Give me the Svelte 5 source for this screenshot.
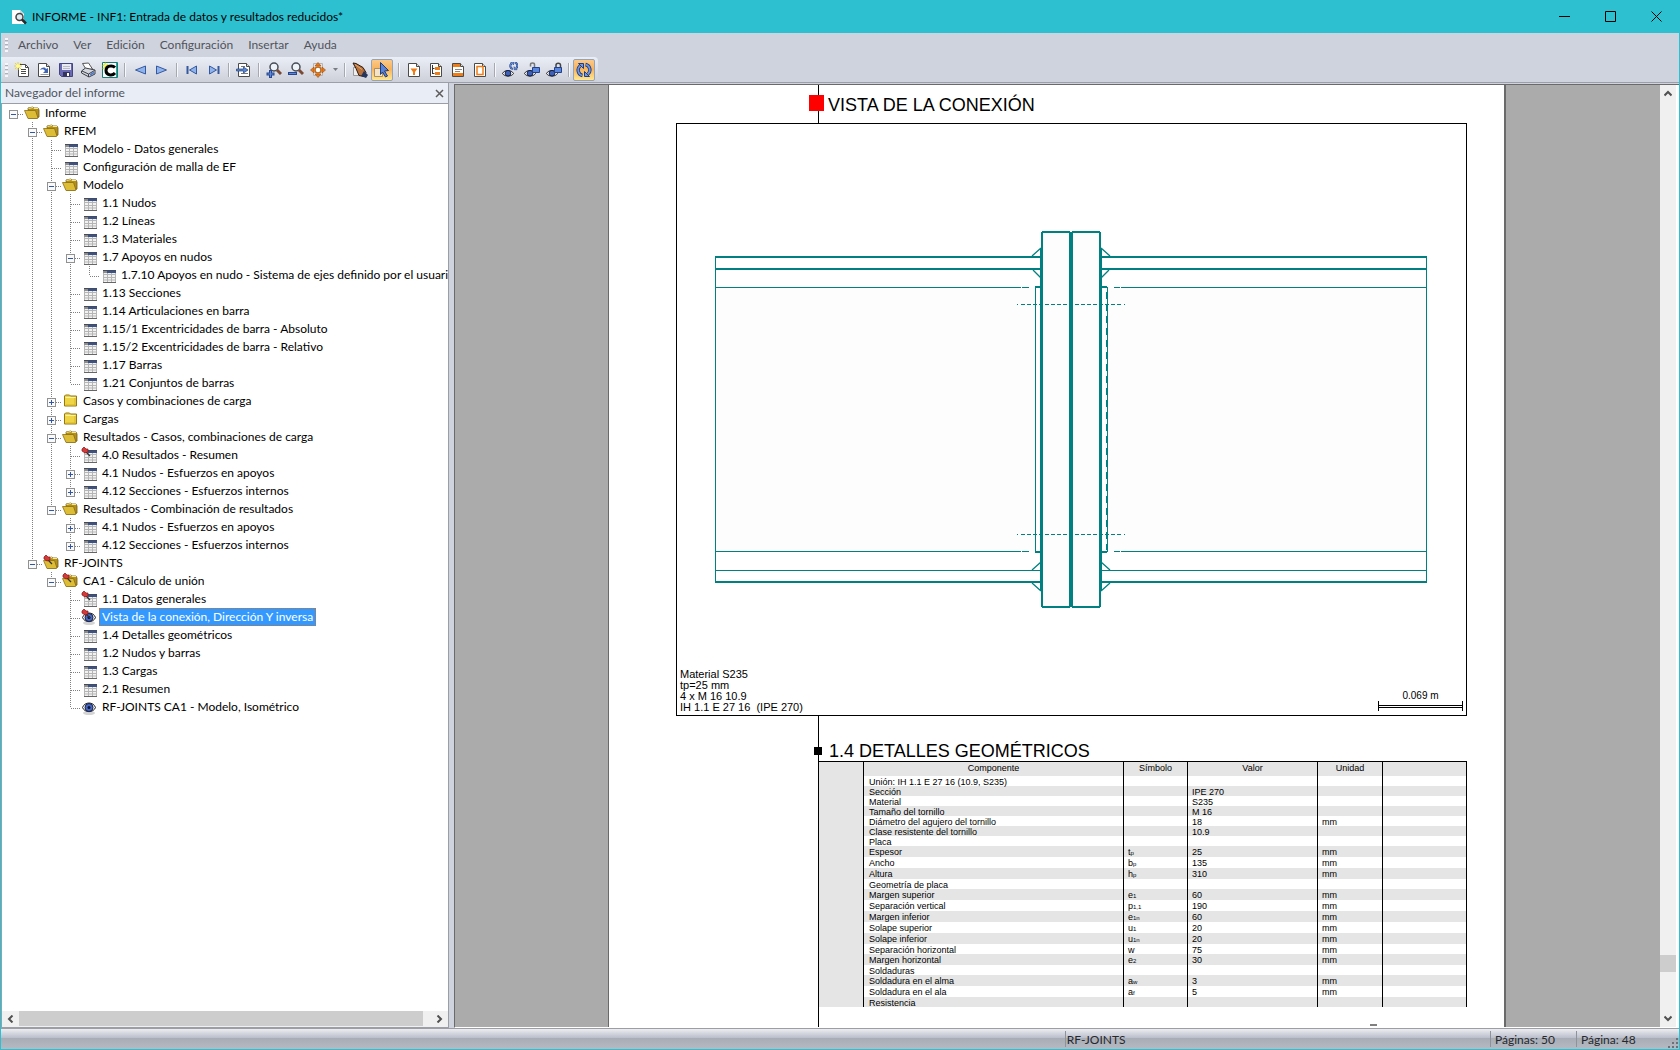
<script>
  const menus = ['Archivo', 'Ver', 'Edición', 'Configuración', 'Insertar', 'Ayuda'];

  const tools = [
    { id: 'new', label: 'Nuevo informe' },
    { id: 'open', label: 'Abrir informe' },
    { id: 'save', label: 'Guardar' },
    { id: 'print', label: 'Imprimir' },
    { id: 'lang', label: 'Idioma' },
    { id: 'sep' },
    { id: 'prev', label: 'Página anterior' },
    { id: 'next', label: 'Página siguiente' },
    { id: 'sep' },
    { id: 'first', label: 'Primera página' },
    { id: 'last', label: 'Última página' },
    { id: 'sep' },
    { id: 'goto', label: 'Ir a página' },
    { id: 'sep' },
    { id: 'zoomin', label: 'Acercar' },
    { id: 'zoomout', label: 'Alejar' },
    { id: 'fit', label: 'Ajustar' },
    { id: 'caret', label: 'Opciones de ajuste' },
    { id: 'sep' },
    { id: 'hand', label: 'Mover' },
    { id: 'pick', label: 'Seleccionar', on: true },
    { id: 'sep' },
    { id: 'filter', label: 'Selección' },
    { id: 'outline', label: 'Índice' },
    { id: 'header', label: 'Encabezado' },
    { id: 'cover', label: 'Portada' },
    { id: 'sep' },
    { id: 'eyesync', label: 'Actualizar vista' },
    { id: 'eyeopen', label: 'Desbloquear vista' },
    { id: 'eyelock', label: 'Bloquear vista' },
    { id: 'sep' },
    { id: 'refresh', label: 'Actualización automática', on: true },
  ];

  // [level, icon, label, toggle]
  const source = [
    [0, 'folder', 'Informe', '-'],
    [1, 'folder', 'RFEM', '-'],
    [2, 'table', 'Modelo - Datos generales'],
    [2, 'table', 'Configuración de malla de EF'],
    [2, 'folder', 'Modelo', '-'],
    [3, 'table', '1.1 Nudos'],
    [3, 'table', '1.2 Líneas'],
    [3, 'table', '1.3 Materiales'],
    [3, 'table', '1.7 Apoyos en nudos', '-'],
    [4, 'table', '1.7.10 Apoyos en nudo - Sistema de ejes definido por el usuari'],
    [3, 'table', '1.13 Secciones'],
    [3, 'table', '1.14 Articulaciones en barra'],
    [3, 'table', '1.15/1 Excentricidades de barra - Absoluto'],
    [3, 'table', '1.15/2 Excentricidades de barra - Relativo'],
    [3, 'table', '1.17 Barras'],
    [3, 'table', '1.21 Conjuntos de barras'],
    [2, 'closed', 'Casos y combinaciones de carga', '+'],
    [2, 'closed', 'Cargas', '+'],
    [2, 'folder', 'Resultados - Casos, combinaciones de carga', '-'],
    [3, 'table pin', '4.0 Resultados - Resumen'],
    [3, 'table', '4.1 Nudos - Esfuerzos en apoyos', '+'],
    [3, 'table', '4.12 Secciones - Esfuerzos internos', '+'],
    [2, 'folder', 'Resultados - Combinación de resultados', '-'],
    [3, 'table', '4.1 Nudos - Esfuerzos en apoyos', '+'],
    [3, 'table', '4.12 Secciones - Esfuerzos internos', '+'],
    [1, 'folder pin', 'RF-JOINTS', '-'],
    [2, 'folder pin', 'CA1 - Cálculo de unión', '-'],
    [3, 'table pin', '1.1 Datos generales'],
    [3, 'eye pin', 'Vista de la conexión, Dirección Y inversa'],
    [3, 'table', '1.4 Detalles geométricos'],
    [3, 'table', '1.2 Nudos y barras'],
    [3, 'table', '1.3 Cargas'],
    [3, 'table', '2.1 Resumen'],
    [3, 'eye', 'RF-JOINTS CA1 - Modelo, Isométrico'],
  ];

  function continues(index, level) {
    for (let i = index + 1; i < source.length; i++) {
      if (source[i][0] < level) return false;
      if (source[i][0] === level) return true;
    }
    return false;
  }

  const rows = source.map(([level, icon, label, toggle], i) => ({
    level,
    icon,
    label,
    toggle,
    guides: Array.from({ length: level }, (_, k) => continues(i, k)),
    more: continues(i, level),
  }));

  let selected = $state(28);

  const details = [
    ['Unión: IH 1.1 E 27 16 (10.9, S235)', '', '', '', ''],
    ['Sección', '', '', 'IPE 270', ''],
    ['Material', '', '', 'S235', ''],
    ['Tamaño del tornillo', '', '', 'M 16', ''],
    ['Diámetro del agujero del tornillo', '', '', '18', 'mm'],
    ['Clase resistente del tornillo', '', '', '10.9', ''],
    ['Placa', '', '', '', ''],
    ['Espesor', 't', 'p', '25', 'mm'],
    ['Ancho', 'b', 'p', '135', 'mm'],
    ['Altura', 'h', 'p', '310', 'mm'],
    ['Geometría de placa', '', '', '', ''],
    ['Margen superior', 'e', '1', '60', 'mm'],
    ['Separación vertical', 'p', '1,1', '190', 'mm'],
    ['Margen inferior', 'e', '1n', '60', 'mm'],
    ['Solape superior', 'u', '1', '20', 'mm'],
    ['Solape inferior', 'u', '1n', '20', 'mm'],
    ['Separación horizontal', 'w', '', '75', 'mm'],
    ['Margen horizontal', 'e', '2', '30', 'mm'],
    ['Soldaduras', '', '', '', ''],
    ['Soldadura en el alma', 'a', 'w', '3', 'mm'],
    ['Soldadura en el ala', 'a', 'f', '5', 'mm'],
    ['Resistencia', '', '', '', ''],
  ];
</script>

{#snippet sheet()}
  <path d="M2.500 1.500h8l3 3v10h-11z" fill="#fff" stroke="#4a4a48" />
  <path d="M10.500 1.500v3h3" fill="#ddd" stroke="#4a4a48" />
{/snippet}

{#snippet eye()}
  <path d="M.5 11.500c2-4 9-4 11 0-2 3.500-9 3.500-11 0z" fill="#f4f4f4" stroke="#222" />
  <circle cx="6" cy="11.200" r="2.800" fill="#3f62b8" stroke="#14224d" />
{/snippet}

{#snippet cycle()}
  <path d="M9.500 2.500A5.500 5.500 0 0 1 12 12" fill="none" stroke="#1f3c82" stroke-width="3.400" />
  <path d="M6.500 13.500A5.500 5.500 0 0 1 4 4" fill="none" stroke="#1f3c82" stroke-width="3.400" />
  <path d="M13.500 14.500H8.500V9.500zM2.500 1.500h5v5z" fill="#6e97e6" stroke="#1f3c82" />
  <path d="M9.500 2.500A5.500 5.500 0 0 1 12 12M6.500 13.500A5.500 5.500 0 0 1 4 4" fill="none" stroke="#6e97e6" stroke-width="1.600" />
{/snippet}

{#snippet toolIcon(id)}
  <svg viewBox="0 0 16 16" width="16" height="16" aria-hidden="true">
    {#if id === 'new'}
      <path d="M4.500 2.500h7l3 3v9h-10z" fill="#fff" stroke="#4a4a48" />
      <path d="M11.500 2.500v3h3M7 7.500h5M7 9.500h5M7 11.500h5" fill="none" stroke="#4a4a48" />
      <path d="M4 0v8M0 4h8M1 1l6 6M7 1L1 7" stroke="#e8d431" stroke-width="1" />
      <circle cx="4" cy="4" r="2" fill="#fff9a0" />
    {:else if id === 'open'}
      {@render sheet()}
      <path d="M4 8c2-3 5-3 6-1l2-1v5H7l2-2c-1-2-3-2-5-1z" fill="#3f66b4" />
      <path d="M4.500 12.500h8" stroke="#999" />
    {:else if id === 'save'}
      <path d="M1.500 1.500h13v13h-11l-2-2z" fill="#6a69b4" stroke="#45457f" />
      <path d="M4 2h9v6H4z" fill="#e9e9f2" />
      <path d="M5 4.500h7M5 6.500h7" stroke="#b9b9c9" />
      <path d="M5 10h7v4.500H5z" fill="#33335c" />
      <path d="M9 11h2v3H9z" fill="#fff" />
    {:else if id === 'print'}
      <path d="M2.500 1.500l6-.5 4 6-6 1z" fill="#fff" stroke="#555" />
      <path d="M1.500 9l4-3 9.500 2v4l-6 3-7.500-4z" fill="#d3d6dd" stroke="#3c3f47" />
      <path d="M2 9l6.500 3 6-3.500M8.500 12v3" fill="none" stroke="#3c3f47" />
      <path d="M10 13l4-2.500" stroke="#4d79c8" stroke-width="1.500" />
    {:else if id === 'lang'}
      <path d="M.5.5h15v15H.5z" fill="#fff" stroke="#157d76" />
      <path d="M1 7l5-5M1 4l3-3" stroke="#e7e03a" stroke-width="1.500" />
      <path d="M13 5.500C10 2.500 4 4 4 8.500s6 6 9 2.500" fill="none" stroke="#000" stroke-width="3" />
      <path d="M14.500 1v14" stroke="#2ca59b" />
    {:else if id === 'prev'}
      <path d="M13.500 4v8L3.500 8z" fill="#8fb3ec" stroke="#35589f" />
    {:else if id === 'next'}
      <path d="M2.500 4v8l10-4z" fill="#8fb3ec" stroke="#35589f" />
    {:else if id === 'first'}
      <path d="M12.500 4v8L5.500 8z" fill="#8fb3ec" stroke="#35589f" />
      <path d="M3.500 4v8" stroke="#35589f" stroke-width="2" />
    {:else if id === 'last'}
      <path d="M3.500 4v8l7-4z" fill="#8fb3ec" stroke="#35589f" />
      <path d="M12.500 4v8" stroke="#35589f" stroke-width="2" />
    {:else if id === 'goto'}
      {@render sheet()}
      <path d="M5 4.500h4M5 11.500h7" stroke="#777" />
      <path d="M.5 7h7V5l4.500 3-4.500 3V9h-7z" fill="#5a86d6" stroke="#24427f" stroke-width=".7" />
    {:else if id === 'zoomin' || id === 'zoomout'}
      <circle cx="8" cy="5" r="4" fill="#eef3fa" stroke="#474b55" stroke-width="1.500" />
      <path d="M11 8l4 4" stroke="#7a4a35" stroke-width="3" />
      {#if id === 'zoomin'}
        <path d="M4.500 8v8M.5 12h8" stroke="#27478f" stroke-width="3" />
        <path d="M4.500 9v6M1.500 12h6" stroke="#5e88dc" />
      {:else}
        <path d="M0 11.500h9" stroke="#27478f" stroke-width="3" />
        <path d="M1 11.500h7" stroke="#5e88dc" />
      {/if}
    {:else if id === 'fit'}
      <path d="M3.500 1.500h9v12h-9z" fill="#e4e4e4" stroke="#b4b4b4" />
      <path d="M8 .5l3 3.500H5zM8 15.500L11 12H5zM.5 8L4 5v6zM15.500 8L12 5v6z" fill="#e8791a" stroke="#9c4c0c" stroke-width=".6" />
      <circle cx="8" cy="8" r="3" fill="#fff" stroke="#c8660f" stroke-width="1.500" />
    {:else if id === 'hand'}
      <path d="M1.500 5.500h6v8h-6z" fill="#eee" stroke="#999" />
      <path d="M1 1l3 .5 7 4 3 5-2 4-5-1-3-7z" fill="#b8713a" stroke="#2b1a10" />
      <path d="M12 9l4 4-2 3-5-2z" fill="#25355c" />
      <path d="M3 2.500l7 5" stroke="#e3a873" />
    {:else if id === 'pick'}
      <path d="M.5 6.500h8v8h-8z" fill="#f4e3c6" stroke="#a98f66" />
      <path d="M6.500.5l8 8-4 .5 3 5-2 1-3-5-2 2.500z" fill="#5a83d8" stroke="#1d3a7c" />
    {:else if id === 'filter'}
      {@render sheet()}
      <path d="M4.500 6.500h7L9 10v3H7v-3z" fill="#ee7d18" />
    {:else if id === 'outline'}
      {@render sheet()}
      <path d="M4.500 3v9M4.500 6.500h2M4.500 11.500h2" fill="none" stroke="#333" />
      <path d="M7 5h5v3H7zM7 10h5v3H7z" fill="#ee7d18" />
    {:else if id === 'header'}
      {@render sheet()}
      <path d="M3 2h7v3H3zM3 11h10v3H3z" fill="#ee7d18" />
      <path d="M5 7.500h7M5 9.500h5" stroke="#888" />
    {:else if id === 'cover'}
      {@render sheet()}
      <path d="M5 4.500h6v8H5z" fill="#fff" stroke="#ee7d18" stroke-width="1.500" />
    {:else if id === 'eyesync'}
      {@render eye()}
      <g class="mini">{@render cycle()}</g>
    {:else if id === 'eyeopen'}
      {@render eye()}
      <path d="M6.500 4.500V2.500c0-2 4-2 4 0v3" fill="none" stroke="#777" stroke-width="1.500" />
      <path d="M8.500 5.500h7v5h-7z" fill="#5b86de" stroke="#23418a" />
    {:else if id === 'eyelock'}
      {@render eye()}
      <path d="M10 6V3c0-2.500 4.500-2.500 4.500 0v3" fill="none" stroke="#444" stroke-width="1.500" />
      <path d="M8.500 5.500h7v5h-7z" fill="#5b86de" stroke="#23418a" />
    {:else if id === 'refresh'}
      {@render cycle()}
    {/if}
  </svg>
{/snippet}

{#snippet treeIcon(kind)}
  <svg viewBox="0 0 18 18" width="18" height="18" aria-hidden="true">
    {#if kind.startsWith('folder')}
      <path d="M5 4l5-1 1 1h4l1 2v7l-2 1H6z" fill="#b3901c" stroke="#73590d" stroke-width=".8" />
      <path d="M1.500 6.500h11l2.500 7.500-1 .5H5z" fill="#dcbd35" stroke="#8a6c14" stroke-width=".8" />
      <path d="M5.500 4.500L10 3.500l1 1h4" fill="none" stroke="#f6e98e" />
    {:else if kind === 'closed'}
      <path d="M3.500 4l1-1h4l1 1h6v10h-12z" fill="#efd445" stroke="#95780f" />
      <path d="M4.500 5.500h10" stroke="#fbf3ad" />
      <path d="M14 6v7H5" fill="none" stroke="#d6b62e" />
    {:else if kind.startsWith('table')}
      <path d="M4 4h13v13H4z" fill="#f2f2f2" />
      <path d="M4.500 4v13M8.500 7v10M12.500 7v10M16.500 4v13M4 8.500h13M4 11.500h13M4 14h13" stroke="#b5b5b5" fill="none" />
      <path d="M4 4h4v3H4z" fill="#8d8d8d" />
      <path d="M8 4h9v3H8z" fill="#3a528c" />
      <path d="M4 4.500h13" stroke="#444a58" />
      <path d="M4 16.500h13" stroke="#666" />
    {:else}
      <ellipse cx="9" cy="15" rx="6" ry="2" fill="#d4d4d4" />
      <path d="M2.500 9.500c2-6 11-6 13 0-2 5.500-11 5.500-13 0z" fill="#f3f3f3" stroke="#222" />
      <circle cx="9" cy="9.500" r="4" fill="#4668c0" stroke="#18244d" />
      <circle cx="9" cy="9.500" r="1.500" fill="#0c1433" />
    {/if}
    {#if kind.endsWith('pin')}
      <path d="M6 6l4 4" stroke="#333" stroke-width="1.300" />
      <path d="M2 3l2-2 2 2h2v3l-3 1-3-2z" fill="#d33a3a" stroke="#8a1414" stroke-width=".7" />
    {/if}
  </svg>
{/snippet}

<div class="window">
  <header class="titlebar">
    <svg class="logo" viewBox="0 0 16 16" width="16" height="16" aria-hidden="true">
      <path d="M1 1h8l4 4v10H1z" fill="#fff" />
      <path d="M9 1v4h4z" fill="#cfd6dc" />
      <circle cx="8.500" cy="8" r="3.500" fill="#dcecf2" stroke="#444" stroke-width="1.500" />
      <path d="M11 10.500l4 4" stroke="#2a2a2a" stroke-width="2.500" />
    </svg>
    <h1>INFORME - INF1: Entrada de datos y resultados reducidos*</h1>
    <div class="winbuttons">
      <button aria-label="Minimizar"><svg viewBox="0 0 11 11" width="11" height="11"><path d="M0 5.500h11" /></svg></button>
      <button aria-label="Maximizar"><svg viewBox="0 0 11 11" width="11" height="11"><path d="M.5.5h10v10H.5z" /></svg></button>
      <button aria-label="Cerrar"><svg viewBox="0 0 11 11" width="11" height="11"><path d="M.5.5l10 10M10.500.5l-10 10" /></svg></button>
    </div>
  </header>

  <nav class="menubar">
    <span class="grip"></span>
    {#each menus as m}<button>{m}</button>{/each}
  </nav>

  <div class="toolrow">
    <div class="toolbar" role="toolbar">
      <span class="grip"></span>
      {#each tools as t}
        {#if t.id === 'sep'}
          <span class="sep"></span>
        {:else if t.id === 'caret'}
          <button class="caret" aria-label={t.label}><svg viewBox="0 0 5 3" width="5" height="3"><path d="M0 0h5L2.500 3z" fill="#777b84" /></svg></button>
        {:else}
          <button class:on={t.on} aria-label={t.label}>{@render toolIcon(t.id)}</button>
        {/if}
      {/each}
    </div>
  </div>

  <div class="work">
    <aside class="navigator">
      <div class="panelhead">
        <h2>Navegador del informe</h2>
        <button aria-label="Cerrar panel"><svg viewBox="0 0 9 9" width="9" height="9"><path d="M1 1l7 7M8 1L1 8" stroke="#5c5c5c" stroke-width="1.500" /></svg></button>
      </div>
      <div class="treebox">
        <ul class="tree">
          {#each rows as row, i}
            <li>
              {#each row.guides as g, k}
                <span class="cell" class:full={g && k > 0}></span>
              {/each}
              <span class="cell branch" class:root={row.level === 0} class:more={row.more}>
                {#if row.toggle}
                  <button class="toggle" aria-label={row.toggle === '-' ? 'Contraer' : 'Expandir'}>
                    <svg viewBox="0 0 9 9" width="9" height="9"><rect x=".5" y=".5" width="8" height="8" fill="#fafafa" stroke="#919191" /><path d={row.toggle === '-' ? 'M2 4.500h5' : 'M2 4.500h5M4.500 2v5'} stroke="#3355a5" /></svg>
                  </button>
                {/if}
              </span>
              <span class="icon">{@render treeIcon(row.icon)}</span>
              <button class="label" class:selected={i === selected} onclick={() => (selected = i)}>{row.label}</button>
            </li>
          {/each}
        </ul>
        <div class="hscroll">
          <button aria-label="Izquierda"><svg viewBox="0 0 7 8" width="7" height="8"><path d="M5.500.5L2 4l3.500 3.500" /></svg></button>
          <span class="track"><span class="thumb"></span></span>
          <button aria-label="Derecha"><svg viewBox="0 0 7 8" width="7" height="8"><path d="M1.500.5L5 4 1.500 7.500" /></svg></button>
        </div>
      </div>
    </aside>

    <main class="viewer">
      <div class="desk">
        <article class="page">
          <h2 class="heading first"><span class="mark red"></span>VISTA DE LA CONEXIÓN</h2>
          <figure>
            <svg class="drawing" viewBox="677 124 789 591" role="img" aria-label="Vista de la conexión">
              <g fill="#fdfdfd">
                <rect x="715" y="287" width="320" height="264" />
                <rect x="1108" y="287" width="319" height="264" />
                <rect x="1042" y="232" width="59" height="375" />
              </g>
              <g fill="#008080" shape-rendering="crispEdges">
                <rect x="715" y="256" width="1" height="327" />
                <rect x="1426" y="256" width="1" height="327" />
                <rect x="715" y="256" width="326" height="2" />
                <rect x="715" y="268" width="326" height="2" />
                <rect x="715" y="287" width="306" height="1" />
                <rect x="1022" y="287" width="7" height="1" />
                <rect x="715" y="551" width="306" height="1" />
                <rect x="1022" y="551" width="7" height="1" />
                <rect x="715" y="570" width="326" height="1" />
                <rect x="715" y="581" width="326" height="2" />
                <rect x="1101" y="256" width="326" height="2" />
                <rect x="1101" y="268" width="326" height="2" />
                <rect x="1114" y="287" width="6" height="1" />
                <rect x="1121" y="287" width="306" height="1" />
                <rect x="1114" y="551" width="6" height="1" />
                <rect x="1121" y="551" width="306" height="1" />
                <rect x="1101" y="570" width="326" height="1" />
                <rect x="1101" y="581" width="326" height="2" />
                <rect x="1041" y="232" width="2" height="375" />
                <rect x="1040" y="248" width="3" height="342" />
                <rect x="1099" y="232" width="2" height="375" />
                <rect x="1099" y="248" width="3" height="342" />
                <rect x="1069" y="232" width="4" height="375" />
                <rect x="1042" y="231" width="28" height="2" />
                <rect x="1072" y="231" width="28" height="2" />
                <rect x="1042" y="606" width="28" height="2" />
                <rect x="1072" y="606" width="28" height="2" />
                <rect x="1035" y="286" width="6" height="2" />
                <rect x="1035" y="286" width="1" height="267" />
                <rect x="1035" y="551" width="6" height="2" />
                <rect x="1101" y="286" width="6" height="2" />
                <rect x="1107" y="287" width="1" height="265" />
                <rect x="1101" y="551" width="6" height="2" />
                <rect x="1017" y="304" width="1" height="1" />
                <rect x="1017" y="534" width="1" height="1" />
                <rect x="1124" y="304" width="1" height="1" />
                <rect x="1124" y="534" width="1" height="1" />
              </g>
              <g fill="none" stroke="#008080">
                <path d="M1106.500 292V550" stroke-dasharray="7 5" />
                <path d="M1021 304.500H1122M1021 534.500H1122" stroke-dasharray="4 2" />
                <path d="M1032 256l9-8M1033 270l8 8M1110 256l-9-8M1109 270l-8 8M1032 570l9-8M1032 583l9 8M1110 570l-9-8M1110 583l-9 8" stroke-width="1.300" />
              </g>
            </svg>
            <figcaption>
              <p>Material S235<br />tp=25 mm<br />4 x M 16 10.9<br />IH 1.1 E 27 16&nbsp; (IPE 270)</p>
              <div class="scale">
                <span>0.069 m</span>
                <svg viewBox="0 0 85 10" width="85" height="10" aria-hidden="true"><path d="M.5 0v10M84.500 0v10M0 4.500h85M0 6.500h85" stroke="#000" /></svg>
              </div>
            </figcaption>
          </figure>
          <h2 class="heading"><span class="mark"></span>1.4 DETALLES GEOMÉTRICOS</h2>
          <table>
            <colgroup>
              <col class="c0" /><col /><col class="c2" /><col class="c3" /><col class="c4" /><col class="c5" />
            </colgroup>
            <thead>
              <tr><th></th><th>Componente</th><th>Símbolo</th><th>Valor</th><th>Unidad</th><th></th></tr>
            </thead>
            <tbody>
              {#each details as [name, sym, sub, value, unit]}
                <tr class:tall={sub}>
                  <td></td><td>{name}</td><td>{sym}{#if sub}<small>{sub}</small>{/if}</td><td>{value}</td><td>{unit}</td><td></td>
                </tr>
              {/each}
            </tbody>
          </table>
          <span class="footmark"></span>
        </article>
      </div>
      <div class="vscroll">
        <button aria-label="Arriba"><svg viewBox="0 0 8 7" width="8" height="7"><path d="M.5 5.500L4 2l3.500 3.500" /></svg></button>
        <span class="track"><span class="thumb"></span></span>
        <button aria-label="Abajo"><svg viewBox="0 0 8 7" width="8" height="7"><path d="M.5 1.500L4 5l3.500-3.500" /></svg></button>
      </div>
    </main>
  </div>

  <footer class="status">
    <span class="module">RF-JOINTS</span>
    <span class="pages">Páginas: 50</span>
    <span class="current">Página: 48</span>
    <svg viewBox="0 0 12 12" width="12" height="12" aria-hidden="true"><path d="M9 1h2v2H9zM5 5h2v2H5zM9 5h2v2H9zM1 9h2v2H1zM5 9h2v2H5zM9 9h2v2H9z" fill="#6d7079" /></svg>
  </footer>
</div>

<style>
  :global(body) { margin: 0; }
  * { box-sizing: border-box; }
  button { border: 0; padding: 0; margin: 0; background: none; font: inherit; color: inherit; }
  h1, h2, p, ul, figure { margin: 0; padding: 0; font-weight: normal; }
  svg { display: block; }

  .window {
    height: 100vh;
    display: flex;
    flex-direction: column;
    border: 1px solid #2cc0d0;
    border-top: 0;
    background: #cfd3dd;
    font: 12px/18px Lato, "Open Sans", sans-serif;
    color: #000;
    overflow: hidden;
  }

  .titlebar { display: flex; align-items: center; height: 33px; flex: none; background: #2cc0d0; padding-left: 10px; }
  .titlebar h1 { font-size: 12px; margin-left: 5px; flex: 1; white-space: nowrap; }
  .winbuttons { display: flex; }
  .winbuttons button { width: 46px; height: 33px; display: grid; place-items: center; }
  .winbuttons path { fill: none; stroke: #000; }

  .menubar { display: flex; align-items: center; gap: 15px; height: 24px; flex: none; padding-left: 4px; color: #50545c; }
  .menubar .grip { margin-right: -5px; }
  .grip { width: 3px; height: 14px; flex: none; background: repeating-linear-gradient(#f6f7fa 0 2px, #aeb2bc 2px 3px, transparent 3px 4px); }

  .toolrow { flex: none; border-bottom: 1px solid #9c9fa8; display: flex; }
  .toolbar {
    display: flex;
    align-items: center;
    height: 25px;
    padding: 0 1px 0 4px;
    border-radius: 0 4px 4px 0;
    background: linear-gradient(#eaeef7, #dcdfe8 50%, #cdd0d9);
  }
  .toolbar .grip { margin-right: 3px; }
  .toolbar button { width: 22px; height: 22px; display: grid; place-items: center; }
  .toolbar .caret { width: 12px; }
  .toolbar .sep { width: 8px; height: 14px; background: linear-gradient(90deg, transparent 3px, #a6a9b2 3px 4px, #f8f9fb 4px 5px, transparent 5px); }
  .toolbar .on { margin: 0 2px 0 0; border: 1px solid #95a3b4; border-radius: 2px; background: linear-gradient(#fbc98a, #f8b25b 45%, #ffe78f); }
  .mini { transform: translate(7px, -1px) scale(0.6); }

  .work { flex: 1; min-height: 0; display: flex; gap: 5px; }
  .navigator { width: 448px; flex: none; display: flex; flex-direction: column; border-right: 1px solid #9b9ea6; }
  .panelhead { height: 20px; flex: none; display: flex; align-items: center; justify-content: space-between; padding: 0 4px; background: #e9edf6; color: #50545c; }
  .panelhead h2 { font-size: 12px; }
  .treebox { flex: 1; min-height: 0; display: flex; flex-direction: column; background: #fff; border: 1px solid #9b9ea6; border-right: 0; }
  .tree { flex: 1; list-style: none; overflow: hidden; padding: 0 0 0 2px; }
  .tree li { display: flex; height: 18px; }
  .cell, .icon { width: 19px; height: 18px; flex: none; position: relative; }
  .cell.full, .branch { background: repeating-linear-gradient(#808080 0 1px, transparent 1px 2px) 9px 0 / 1px 100% no-repeat; }
  .branch { background-size: 1px 10px; display: grid; place-items: center; }
  .branch.more { background-size: 1px 100%; }
  .branch.root { background: none; }
  .branch::before { content: ""; position: absolute; left: 10px; right: 0; top: 10px; height: 1px; background: repeating-linear-gradient(90deg, #808080 0 1px, transparent 1px 2px); }
  .toggle { position: relative; margin-top: 3px; }
  .label { height: 18px; line-height: 16px; padding: 0 2px; white-space: nowrap; text-align: left; border: 1px solid transparent; }
  .label.selected { background: #3399ff; color: #fff; border: 1px dotted #c8712a; }

  .hscroll { display: flex; height: 16px; flex: none; background: #f0f0f0; padding-bottom: 1px; }
  .hscroll button { width: 17px; display: grid; place-items: center; }
  .hscroll path, .vscroll path { fill: none; stroke: #505050; stroke-width: 2; }
  .track { flex: 1; display: flex; }
  .hscroll .thumb { width: 98%; background: #cdcdcd; }

  .viewer { flex: 1; min-width: 0; display: flex; margin-top: 1px; border: 1px solid #6a6a6a; border-width: 1px 0 0 1px; border-bottom: 1px solid #fff; background: #ababab; }
  .desk { flex: 1; min-width: 0; padding: 0 154px 0 153px; overflow: hidden; }
  .page {
    min-height: 100%;
    padding: 0 37px 0 67px;
    border-left: 1px solid #6a6a6a;
    border-right: 2px solid #6a6a6a;
    background: linear-gradient(#000, #000) 209px 0 / 1px 100% no-repeat #fff;
    font-family: "Liberation Sans", Arial, sans-serif;
  }
  .heading { display: flex; align-items: center; font-size: 18px; line-height: 20px; padding: 24px 0 0 138px; height: 45px; }
  .heading.first { height: 38px; padding: 2px 0 0 133px; }
  .mark { width: 8px; height: 8px; background: #000; margin-right: 7px; }
  .mark.red { width: 15px; height: 16px; background: #f00; margin: 0 4px 4px 0; }
  .footmark { display: block; width: 7px; height: 2px; margin: 17px 90px 0 auto; background: #808080; }

  figure { display: grid; border: 1px solid #000; background: #fff; }
  .drawing { grid-area: 1 / 1; width: 100%; height: auto; }
  figcaption { grid-area: 1 / 1; align-self: end; display: flex; justify-content: space-between; align-items: flex-end; padding: 0 3px 2px 3px; font-size: 11px; line-height: 11px; }
  .scale { display: flex; flex-direction: column; align-items: center; font-size: 10px; padding-bottom: 2px; }

  table { width: calc(100% - 142px); margin-left: 142px; table-layout: fixed; border-collapse: separate; border-spacing: 0; border-top: 1px solid #000; font-size: 9px; line-height: 8px; }
  .c0 { width: 45px; }
  .c2 { width: 64px; }
  .c3 { width: 130px; }
  .c4 { width: 65px; }
  .c5 { width: 85px; }
  th { height: 14px; padding: 0 0 2px; font-weight: normal; background: #e5e5e5; border-left: 1px solid #000; }
  td { height: 10px; padding: 2px 0 0 4px; border-left: 1px solid #000; white-space: nowrap; }
  .tall td { height: 11px; padding: 1px 0 1px 4px; }
  td:nth-child(2), .tall td:nth-child(2) { padding-left: 5px; }
  th:last-child, td:last-child { border-right: 1px solid #000; }
  tbody tr:nth-child(even) td, td:first-child { background: #e5e5e5; }
  small { font-size: 6px; line-height: 6px; }

  .vscroll { width: 19px; flex: none; display: flex; flex-direction: column; background: #f0f0f0; border-right: 3px solid #fff; }
  .vscroll button { height: 17px; display: grid; place-items: center; }
  .vscroll .track { flex-direction: column; justify-content: flex-end; padding-bottom: 38px; }
  .vscroll .thumb { height: 17px; background: #cdcdcd; }

  .status { display: flex; align-items: center; height: 21px; flex: none; border-top: 1px solid #9b9ea6; background: linear-gradient(#ededf1, #b9bdcb 45%, #a8acb5 45%, #b6bac3); color: #26282c; }
  .status span { border-left: 1px solid #8e929b; height: 16px; line-height: 18px; padding-left: 4px; white-space: nowrap; }
  .status .module { flex: 1; margin-left: 63.4%; padding-left: 1px; }
  .status .pages { width: 86px; }
  .status .current { width: 91px; }
  .status svg { align-self: flex-end; }
</style>
